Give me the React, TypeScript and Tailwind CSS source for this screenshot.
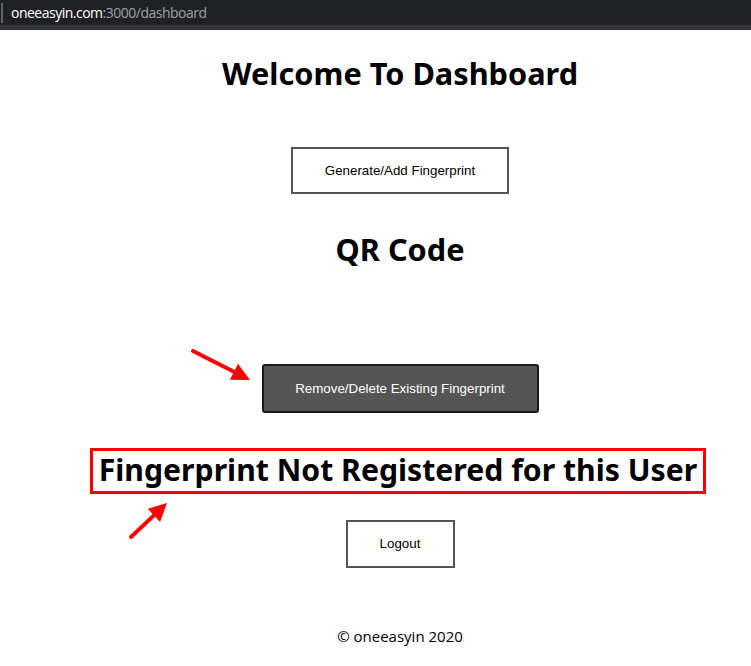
import React from 'react';

const heading = "font-['Noto_Sans',sans-serif] font-bold text-black whitespace-nowrap";
const btnText = "font-['Liberation_Sans',Arial,sans-serif] text-[13.33px]";

const Arrow: React.FC<{ x1: number; y1: number; x2: number; y2: number }> = ({ x1, y1, x2, y2 }) => {
  const ang = Math.atan2(y2 - y1, x2 - x1);
  const len = 18;
  const w = 9;
  const bx = x2 - Math.cos(ang) * len;
  const by = y2 - Math.sin(ang) * len;
  const px = -Math.sin(ang) * w;
  const py = Math.cos(ang) * w;
  return (
    <g>
      <line x1={x1} y1={y1} x2={bx} y2={by} stroke="#ff0000" strokeWidth={4} strokeLinecap="round" />
      <polygon points={`${x2},${y2} ${bx + px},${by + py} ${bx - px},${by - py}`} fill="#ff0000" />
    </g>
  );
};

export default function App() {
  return (
    <div className="relative w-[751px] h-[666px] overflow-hidden bg-white">
      {/* browser address bar */}
      <div className="h-[25px] bg-[#202124] flex items-center">
        <div className="w-[2px] h-[20px] bg-[#5f6368] ml-[1px]" />
        <span className="ml-[8px] font-['Open_Sans',sans-serif] text-[14px] tracking-[-0.5px] text-white">
          oneeasyin.com<span className="text-[#9aa0a6]">:3000/dashboard</span>
        </span>
      </div>
      <div className="h-[5px] bg-[#35363a]" />

      <div className="w-[800px] flex flex-col items-center">
        <h1 className={`${heading} text-[30.7px] leading-[38px] mt-[24px]`}>Welcome To Dashboard</h1>

        <button className={`${btnText} mt-[55px] w-[218px] h-[47px] border-2 border-[#555] bg-white text-black`}>
          Generate/Add Fingerprint
        </button>

        <h2 className={`${heading} text-[30.7px] leading-[38px] mt-[36px]`}>QR Code</h2>

        <button className={`${btnText} mt-[96px] w-[277px] h-[49px] border-2 border-[#1a1a1a] rounded-[3px] bg-[#555] text-white`}>
          Remove/Delete Existing Fingerprint
        </button>

        <div className="mt-[35px] ml-[-4px] w-[616px] h-[46px] border-[3px] border-[#ff0000] flex items-center justify-center">
          <h3 className={`${heading} shrink-0 text-[30.2px] leading-[38px] mt-[-2px]`}>Fingerprint Not Registered for this User</h3>
        </div>

        <button className={`${btnText} mt-[26px] w-[109px] h-[48px] border-2 border-[#555] bg-white text-black`}>
          Logout
        </button>

        <p className="mt-[57px] font-['Open_Sans',sans-serif] text-[15px] text-black">© oneeasyin 2020</p>
      </div>

      {/* annotation arrows */}
      <svg className="absolute inset-0 pointer-events-none" width={751} height={666}>
        <Arrow x1={193} y1={351} x2={250} y2={380} />
        <Arrow x1={131} y1={537} x2={167} y2={503} />
      </svg>
    </div>
  );
}
